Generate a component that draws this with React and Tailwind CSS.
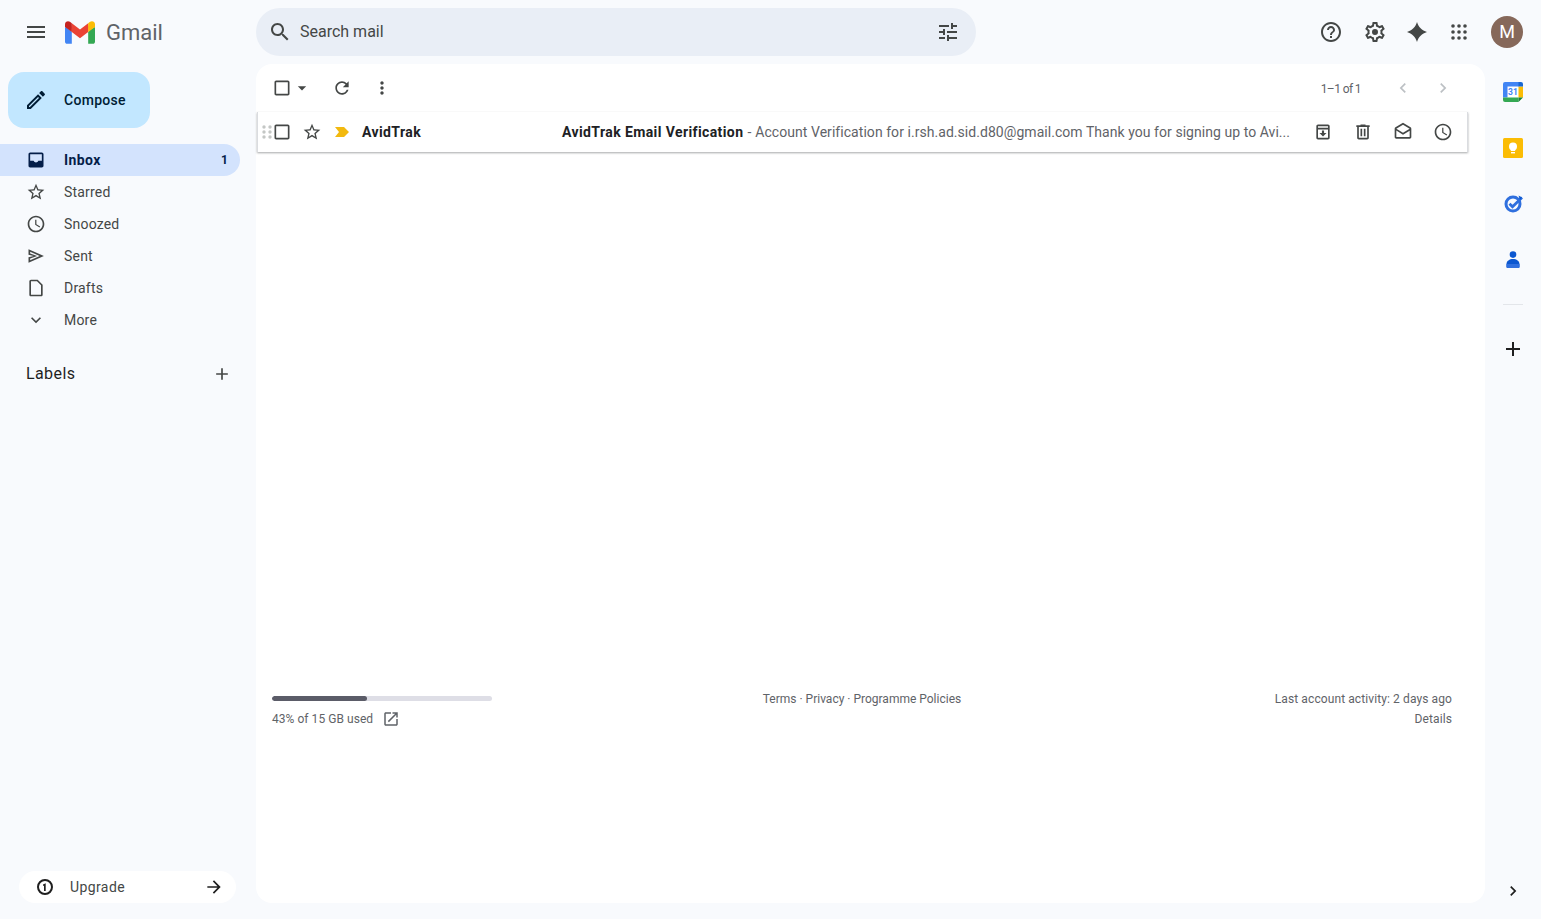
import React from "react";

const Icon = ({ d, size = 20, className = "text-[#444746]" }) => (
  <svg width={size} height={size} viewBox="0 0 24 24" fill="currentColor" className={`shrink-0 ${className}`}>
    <path d={d} />
  </svg>
);

const paths = {
  menu: "M3 18h18v-2H3v2zm0-5h18v-2H3v2zm0-7v2h18V6H3z",
  search: "M15.5 14h-.79l-.28-.27C15.41 12.59 16 11.11 16 9.5 16 5.91 13.09 3 9.5 3S3 5.91 3 9.5 5.91 16 9.5 16c1.61 0 3.09-.59 4.23-1.57l.27.28v.79l5 4.99L20.49 19l-4.99-5zm-6 0C7.01 14 5 11.99 5 9.5S7.01 5 9.5 5 14 7.01 14 9.5 11.99 14 9.5 14z",
  tune: "M3 17v2h6v-2H3zM3 5v2h10V5H3zm10 16v-2h8v-2h-8v-2h-2v6h2zM7 9v2H3v2h4v2h2V9H7zm14 4v-2H11v2h10zm-6-4h2V7h4V5h-4V3h-2v6z",
  help: "M11 18h2v-2h-2v2zm1-16C6.48 2 2 6.48 2 12s4.48 10 10 10 10-4.48 10-10S17.52 2 12 2zm0 18c-4.41 0-8-3.59-8-8s3.59-8 8-8 8 3.59 8 8-3.59 8-8 8zm0-14c-2.21 0-4 1.79-4 4h2c0-1.1.9-2 2-2s2 .9 2 2c0 2-3 1.75-3 5h2c0-2.25 3-2.5 3-5 0-2.21-1.79-4-4-4z",
  settings: "M19.43 12.98c.04-.32.07-.64.07-.98 0-.34-.03-.66-.07-.98l2.11-1.65c.19-.15.24-.42.12-.64l-2-3.46c-.09-.16-.26-.25-.44-.25-.06 0-.12.01-.17.03l-2.49 1c-.52-.4-1.08-.73-1.69-.98l-.38-2.65C14.46 2.18 14.25 2 14 2h-4c-.25 0-.46.18-.49.42l-.38 2.65c-.61.25-1.17.59-1.69.98l-2.49-1c-.06-.02-.12-.03-.18-.03-.17 0-.34.09-.43.25l-2 3.46c-.13.22-.07.49.12.64l2.11 1.65c-.04.32-.07.65-.07.98 0 .33.03.66.07.98l-2.11 1.65c-.19.15-.24.42-.12.64l2 3.46c.09.16.26.25.44.25.06 0 .12-.01.17-.03l2.49-1c.52.4 1.08.73 1.69.98l.38 2.65c.03.24.24.42.49.42h4c.25 0 .46-.18.49-.42l.38-2.65c.61-.25 1.17-.59 1.69-.98l2.49 1c.06.02.12.03.18.03.17 0 .34-.09.43-.25l2-3.46c.12-.22.07-.49-.12-.64l-2.11-1.65zm-1.98-1.71c.04.31.05.52.05.73 0 .21-.02.43-.05.73l-.14 1.13.89.7 1.08.84-.7 1.21-1.27-.51-1.04-.42-.9.68c-.43.32-.84.56-1.25.73l-1.06.43-.16 1.13-.2 1.35h-1.4l-.19-1.35-.16-1.13-1.06-.43c-.43-.18-.83-.41-1.23-.71l-.91-.7-1.06.43-1.27.51-.7-1.21 1.08-.84.89-.7-.14-1.13c-.03-.31-.05-.54-.05-.74s.02-.43.05-.73l.14-1.13-.89-.7-1.08-.84.7-1.21 1.27.51 1.04.42.9-.68c.43-.32.84-.56 1.25-.73l1.06-.43.16-1.13.2-1.35h1.39l.19 1.35.16 1.13 1.06.43c.43.18.83.41 1.23.71l.91.7 1.06-.43 1.27-.51.7 1.21-1.07.85-.89.7.14 1.13zM12 9a3 3 0 1 0 0 6 3 3 0 0 0 0-6z",
  spark: "M12 2C13.4 7 17 10.6 22 12 17 13.4 13.4 17 12 22 10.6 17 7 13.4 2 12 7 10.6 10.6 7 12 2z",
  edit: "M3 17.25V21h3.75L17.81 9.94l-3.75-3.75L3 17.25zM5.92 19H5v-.92l9.06-9.06.92.92L5.92 19zM20.71 5.63l-2.34-2.34c-.2-.2-.45-.29-.71-.29s-.51.1-.7.29l-1.83 1.83 3.75 3.75 1.83-1.83c.39-.39.39-1.02 0-1.41z",
  inbox: "M19 3H5c-1.1 0-2 .9-2 2v14c0 1.1.9 2 2 2h14c1.1 0 2-.9 2-2V5c0-1.1-.9-2-2-2zm0 10h-4.2c-.5 1.2-1.6 2-2.8 2s-2.3-.8-2.8-2H5V5h14v8z",
  star: "M22 9.24l-7.19-.62L12 2 9.19 8.63 2 9.24l5.46 4.73L5.82 21 12 17.27 18.18 21l-1.63-7.03L22 9.24zM12 15.4l-3.76 2.27 1-4.28-3.32-2.88 4.38-.38L12 6.1l1.71 4.04 4.38.38-3.32 2.88 1 4.28L12 15.4z",
  clock: "M11.99 2C6.47 2 2 6.48 2 12s4.47 10 9.99 10C17.52 22 22 17.52 22 12S17.52 2 11.99 2zM12 20c-4.42 0-8-3.58-8-8s3.58-8 8-8 8 3.58 8 8-3.58 8-8 8zm.5-13H11v6l5.25 3.15.75-1.23-4.5-2.67z",
  sent: "M3 4v6.6l6.2 1.4L3 13.4V20l18.5-8L3 4zm2 3l11.4 5L5 17v-2l8.4-3L5 9V7z",
  draft: "M14 2H6c-1.1 0-2 .9-2 2v16c0 1.1.9 2 2 2h12c1.1 0 2-.9 2-2V8l-6-6zm4 18H6V4h7.17L18 8.83V20z",
  chevronDown: "M16.59 8.59L12 13.17 7.41 8.59 6 10l6 6 6-6z",
  plus: "M19 13h-6v6h-2v-6H5v-2h6V5h2v6h6v2z",
  checkbox: "M19 5v14H5V5h14m0-2H5c-1.1 0-2 .9-2 2v14c0 1.1.9 2 2 2h14c1.1 0 2-.9 2-2V5c0-1.1-.9-2-2-2z",
  dropdown: "M7 10l5 5 5-5z",
  refresh: "M17.65 6.35C16.2 4.9 14.21 4 12 4c-4.42 0-7.99 3.58-7.99 8s3.57 8 7.99 8c3.73 0 6.84-2.55 7.73-6h-2.08c-.82 2.33-3.04 4-5.65 4-3.31 0-6-2.69-6-6s2.69-6 6-6c1.66 0 3.14.69 4.22 1.78L13 11h7V4l-2.35 2.35z",
  moreVert: "M12 8c1.1 0 2-.9 2-2s-.9-2-2-2-2 .9-2 2 .9 2 2 2zm0 2c-1.1 0-2 .9-2 2s.9 2 2 2 2-.9 2-2-.9-2-2-2zm0 6c-1.1 0-2 .9-2 2s.9 2 2 2 2-.9 2-2-.9-2-2-2z",
  chevronLeft: "M15.41 7.41L14 6l-6 6 6 6 1.41-1.41L10.83 12z",
  chevronRight: "M10 6L8.59 7.41 13.17 12l-4.58 4.59L10 18l6-6z",
  archive: "M18 3H6C4.9 3 4 3.9 4 5v14c0 1.1.9 2 2 2h12c1.1 0 2-.9 2-2V5c0-1.1-.9-2-2-2zm0 16H6V9h12v10zM6 7V5h12v2H6zm6 10.5l4.2-4.2h-2.9v-3h-2.6v3H7.8l4.2 4.2z",
  trash: "M15 4V3H9v1H4v2h1v13c0 1.1.9 2 2 2h10c1.1 0 2-.9 2-2V6h1V4h-5zm2 15H7V6h10v13zM9 8h2v9H9zm4 0h2v9h-2z",
  mailOpen: "M21.99 8c0-.72-.37-1.35-.94-1.7L12 1 2.95 6.3C2.38 6.65 2 7.28 2 8v10c0 1.1.9 2 2 2h16c1.1 0 2-.9 2-2l-.01-10zM19.99 8v.01L12 13 4 8l8-4.68L19.99 8zM4 18v-7.66l8 5.02 7.99-4.99L20 18H4z",
  openNew: "M19 19H5V5h7V3H5c-1.11 0-2 .9-2 2v14c0 1.1.89 2 2 2h14c1.1 0 2-.9 2-2v-7h-2v7zM14 3v2h3.59l-9.83 9.83 1.41 1.41L19 6.41V10h2V3h-7z",
  arrow: "M12 4l-1.41 1.41L16.17 11H4v2h12.17l-5.58 5.59L12 20l8-8z",
};

const GmailLogo = () => (
  <svg width="30" height="23" viewBox="0 0 256 193" className="shrink-0">
    <path fill="#4285F4" d="M58.182 192.05V93.14L27.507 65.077 0 49.504v125.091c0 9.658 7.825 17.455 17.455 17.455h40.727Z" />
    <path fill="#34A853" d="M197.818 192.05h40.727c9.659 0 17.455-7.826 17.455-17.455V49.505l-31.156 17.837-27.026 25.798v98.91Z" />
    <path fill="#EA4335" d="m58.182 93.14-4.174-38.647 4.174-36.989L128 69.868l69.818-52.364 4.669 34.992-4.669 40.644L128 145.504z" />
    <path fill="#FBBC04" d="M197.818 17.504V93.14L256 49.504V26.231c0-21.585-24.64-33.89-41.89-20.945l-16.292 12.218Z" />
    <path fill="#C5221F" d="m0 49.504 26.759 20.07L58.182 93.14V17.504L41.89 5.286C24.61-7.66 0 4.646 0 26.23v23.273Z" />
  </svg>
);

const AppsIcon = () => (
  <svg width="24" height="24" viewBox="0 0 24 24" fill="#444746" className="shrink-0">
    {[6, 12, 18].map((y) =>
      [6, 12, 18].map((x) => <circle key={`${x}-${y}`} cx={x} cy={y} r="1.8" />)
    )}
  </svg>
);

const DragDots = () => (
  <svg width="10" height="14" viewBox="0 0 10 14" fill="#c4c7c5" className="shrink-0">
    {[2, 7, 12].map((y) =>
      [2, 8].map((x) => <circle key={`${x}-${y}`} cx={x} cy={y} r="1.7" />)
    )}
  </svg>
);

const CalendarIcon = () => (
  <svg width="20" height="20" viewBox="0 0 20 20" className="shrink-0">
    <rect x="0.5" y="0.5" width="19" height="19" rx="1.5" fill="#fff" />
    <path fill="#4285f4" d="M2 0h14v4.5H4.5V15.5H0V2a2 2 0 0 1 2-2z" />
    <path fill="#34a853" d="M0 15.5h15.5V20H2a2 2 0 0 1-2-2z" />
    <path fill="#fbbc04" d="M15.5 4.5H20v11h-4.5z" />
    <path fill="#188038" d="M15.5 15.5H20L15.5 20z" />
    <path fill="#1967d2" d="M16 0h2a2 2 0 0 1 2 2v2.5h-4.5V0z" />
    <text x="10" y="13.2" textAnchor="middle" fontSize="8.5" fontWeight="700" fill="#4285f4" fontFamily="Roboto, sans-serif">31</text>
  </svg>
);

const KeepIcon = () => (
  <svg width="20" height="20" viewBox="0 0 20 20" className="shrink-0">
    <rect width="20" height="20" rx="1.5" fill="#fbbc04" />
    <circle cx="10" cy="8.6" r="4" fill="#fff" />
    <rect x="7.8" y="11" width="4.4" height="2" fill="#fff" />
    <rect x="8" y="14" width="4" height="1.4" fill="#fff" />
  </svg>
);

const TasksIcon = () => (
  <svg width="20" height="20" viewBox="0 0 20 20" className="shrink-0">
    <circle cx="10" cy="10" r="7" fill="none" stroke="#2f6fde" strokeWidth="3" />
    <path d="M6.5 9.8l3 3L19 3.5" fill="none" stroke="#2f6fde" strokeWidth="2.8" />
    <path d="M15.5 1.5l3.5 2-2 2.5z" fill="#0b57d0" />
  </svg>
);

const ContactsIcon = () => (
  <svg width="20" height="20" viewBox="0 0 20 20" className="shrink-0">
    <circle cx="10" cy="4.6" r="3.3" fill="#0b57d0" />
    <path d="M3.5 14c0-3 3-5 6.5-5s6.5 2 6.5 5v2.8a1.2 1.2 0 0 1-1.2 1.2H4.7a1.2 1.2 0 0 1-1.2-1.2z" fill="#0b57d0" />
    <path d="M3.5 14h13v2.8a1.2 1.2 0 0 1-1.2 1.2H4.7a1.2 1.2 0 0 1-1.2-1.2z" fill="#2f6fde" />
  </svg>
);

const navItems = [
  { label: "Starred", icon: paths.star },
  { label: "Snoozed", icon: paths.clock },
  { label: "Sent", icon: paths.sent },
  { label: "Drafts", icon: paths.draft },
  { label: "More", icon: paths.chevronDown },
];

const App = () => {
  return (
    <div className="flex h-screen flex-col overflow-hidden bg-[#f8fafd] font-['Roboto',sans-serif]">
      {/* Header */}
      <header className="flex h-16 shrink-0 items-center">
        <div className="flex w-64 shrink-0 items-center pl-6">
          <Icon d={paths.menu} size={24} className="text-[#444746]" />
          <div className="ml-[17px]"><GmailLogo /></div>
          <span className="ml-[11px] text-[22px] text-[#5f6368]">Gmail</span>
        </div>

        <div className="flex h-12 w-[720px] items-center rounded-3xl bg-[#e9eef6] pl-3 pr-4">
          <Icon d={paths.search} size={24} />
          <span className="ml-2 flex-1 text-base text-[#444746]">Search mail</span>
          <Icon d={paths.tune} size={24} />
        </div>

        <div className="ml-auto flex items-center pr-[18px]">
          <Icon d={paths.help} size={24} />
          <div className="ml-5"><Icon d={paths.settings} size={24} /></div>
          <div className="ml-[18px]"><Icon d={paths.spark} size={24} /></div>
          <div className="ml-[18px]"><AppsIcon /></div>
          <div className="ml-5 flex size-8 items-center justify-center rounded-full bg-[#86685a] text-lg text-white">M</div>
        </div>
      </header>

      <div className="flex min-h-0 flex-1 pb-4">
        {/* Sidebar */}
        <aside className="flex w-64 shrink-0 flex-col">
          <div className="ml-2 mt-2 flex h-14 w-[142px] items-center rounded-2xl bg-[#c2e7ff] pl-4">
            <Icon d={paths.edit} size={24} className="text-[#001d35]" />
            <span className="ml-4 text-sm font-medium tracking-[0.3px] text-[#001d35]">Compose</span>
          </div>

          <nav className="mt-4 w-60">
            <div className="flex h-8 items-center rounded-r-full bg-[#d3e3fd] pl-[26px] pr-3">
              <Icon d={paths.inbox} size={20} className="text-[#041e49]" />
              <span className="ml-[18px] flex-1 text-sm font-bold tracking-[0.4px] text-[#041e49]">Inbox</span>
              <span className="text-xs font-bold text-[#041e49]">1</span>
            </div>
            {navItems.map((item) => (
              <div key={item.label} className="flex h-8 items-center pl-[26px]">
                <Icon d={item.icon} size={20} />
                <span className="ml-[18px] text-sm tracking-[0.2px] text-[#444746]">{item.label}</span>
              </div>
            ))}
          </nav>

          <div className="mt-[26px] flex w-60 items-center justify-between pl-[26px] pr-2">
            <span className="text-base tracking-[0.4px] text-[#1f1f1f]">Labels</span>
            <Icon d={paths.plus} size={20} />
          </div>

          <div className="ml-[19px] mt-auto flex h-8 w-[217px] items-center rounded-full bg-white pl-4 pr-3">
            <svg width="20" height="20" viewBox="0 0 20 20" className="shrink-0">
              <circle cx="10" cy="10" r="7" fill="none" stroke="#1f1f1f" strokeWidth="2" />
              <path d="M8 7.6l2.7-1.4V14H9V8.6l-1 .5z" fill="#1f1f1f" />
            </svg>
            <span className="ml-[15px] flex-1 text-sm tracking-[0.4px] text-[#444746]">Upgrade</span>
            <Icon d={paths.arrow} size={20} className="text-[#1f1f1f]" />
          </div>
        </aside>

        {/* Main panel */}
        <main className="flex min-w-0 flex-1 flex-col rounded-2xl bg-white">
          <div className="flex h-12 shrink-0 items-center pl-4 pr-8">
            <Icon d={paths.checkbox} size={20} />
            <Icon d={paths.dropdown} size={20} className="text-[#444746]" />
            <div className="ml-[20px]"><Icon d={paths.refresh} size={20} /></div>
            <div className="ml-5"><Icon d={paths.moreVert} size={20} /></div>
            <span className="ml-auto pt-0.5 text-xs tracking-[-0.6px] text-[#5f6368]">1–1 of 1</span>
            <div className="ml-8"><Icon d={paths.chevronLeft} size={20} className="text-[#bcc0c4]" /></div>
            <div className="ml-5"><Icon d={paths.chevronRight} size={20} className="text-[#bcc0c4]" /></div>
          </div>

          {/* Message row */}
          <div className="ml-px mr-[17px] flex h-10 shrink-0 items-center bg-white pr-[15px] shadow-[inset_1px_0_0_#dadce0,inset_-1px_0_0_#dadce0,0_1px_2px_rgba(60,64,67,0.45)]">
            <div className="ml-[5px]"><DragDots /></div>
            <Icon d={paths.checkbox} size={20} className="text-[#444746]" />
            <div className="ml-2.5"><Icon d={paths.star} size={20} /></div>
            <svg width="14" height="12" viewBox="0 0 14 12" className="ml-[13px] shrink-0">
              <path d="M0 1h9l5 5-5 5H0l4-5z" fill="#f2b90f" />
            </svg>
            <span className="ml-[13px] w-[200px] shrink-0 text-sm font-bold tracking-[0.4px] text-[#202124]">AvidTrak</span>
            <div className="flex min-w-0 flex-1 items-baseline whitespace-nowrap text-sm text-[#5f6368]">
              <span className="font-bold tracking-[0.4px] text-[#202124]">AvidTrak Email Verification</span>
              <span className="ml-1">-</span>
              <span className="ml-1 tracking-[0.05px]">Account Verification for i.rsh.ad.sid.d80@gmail.com Thank you for signing up to Avi...</span>
            </div>
            <div className="ml-2"><Icon d={paths.archive} size={20} /></div>
            <div className="ml-5"><Icon d={paths.trash} size={20} /></div>
            <div className="ml-5"><Icon d={paths.mailOpen} size={20} /></div>
            <div className="ml-5"><Icon d={paths.clock} size={20} /></div>
          </div>

          {/* Footer */}
          <div className="mt-[544px] grid grid-cols-3 pl-4 pr-[33px] text-xs text-[#5f6368]">
            <div>
              <div className="h-[5px] w-[220px] overflow-hidden rounded-full bg-[#dedee6]">
                <div className="h-full w-[95px] rounded-full bg-[#5b5c68]" />
              </div>
              <div className="mt-[9px] flex items-center tracking-[0.05px]">
                <span>43% of 15 GB used</span>
                <div className="ml-[9px]"><Icon d={paths.openNew} size={18} className="text-[#5f6368]" /></div>
              </div>
            </div>
            <div className="-mt-[5px] text-center">Terms · Privacy · Programme Policies</div>
            <div className="-mt-[5px] text-right tracking-[0.1px]">
              <div>Last account activity: 2 days ago</div>
              <div className="mt-1">Details</div>
            </div>
          </div>
        </main>

        {/* Right rail */}
        <aside className="flex w-14 shrink-0 flex-col items-center">
          <div className="mt-[18px]"><CalendarIcon /></div>
          <div className="mt-9"><KeepIcon /></div>
          <div className="mt-9"><TasksIcon /></div>
          <div className="mt-9"><ContactsIcon /></div>
          <div className="mt-[34px] h-px w-5 bg-[#e3e6ea]" />
          <div className="mt-[32px]"><Icon d={paths.plus} size={24} className="text-[#1f1f1f]" /></div>
          <div className="mb-0.5 mt-auto"><Icon d={paths.chevronRight} size={20} className="text-[#1f1f1f]" /></div>
        </aside>
      </div>
    </div>
  );
};

export default App;
